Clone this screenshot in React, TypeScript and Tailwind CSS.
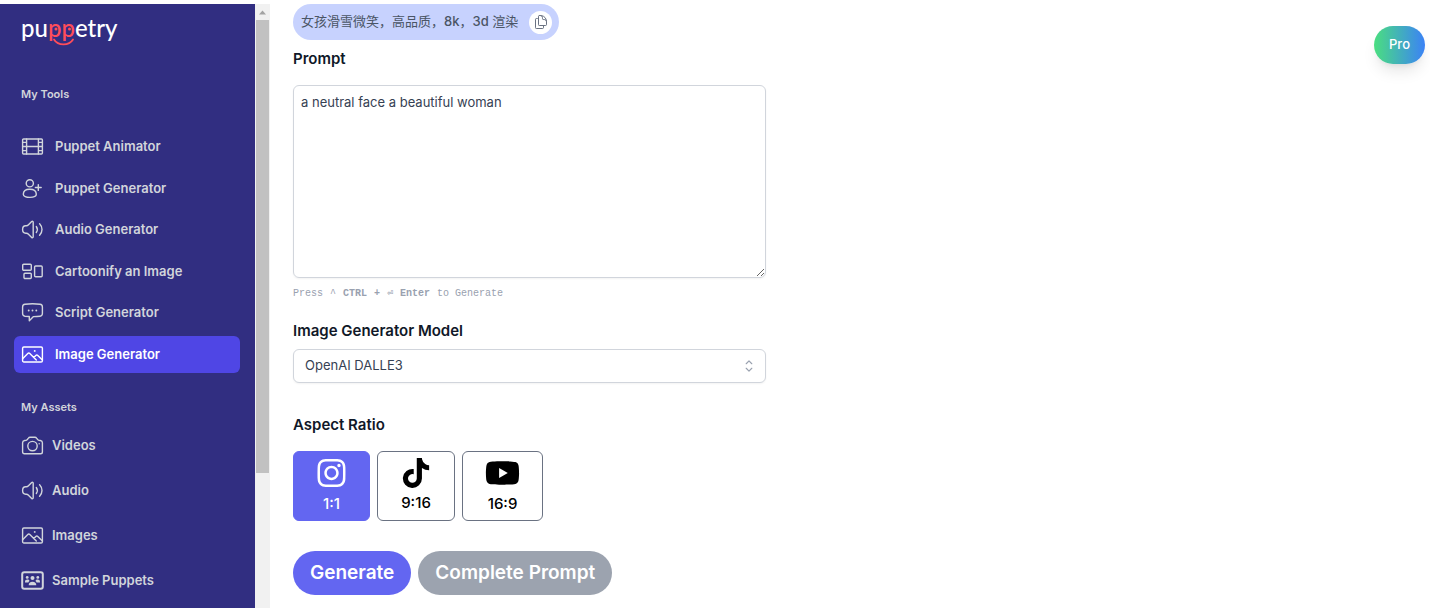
import { useState, type ReactNode } from "react";
import { FaInstagram, FaTiktok, FaYoutube } from "react-icons/fa6";
import { HiChevronUpDown, HiOutlineDocumentDuplicate } from "react-icons/hi2";

interface NavItem {
  label: string;
  icon: ReactNode;
}

function Icon({ children }: { children: ReactNode }) {
  return (
    <svg
      viewBox="0 0 23 23"
      className="h-[23px] w-[23px] shrink-0"
      fill="none"
      stroke="currentColor"
      strokeWidth="1.4"
      strokeLinecap="round"
      strokeLinejoin="round"
      aria-hidden="true"
    >
      {children}
    </svg>
  );
}

const film = (
  <Icon>
    <rect x="1.6" y="4" width="19.8" height="15" rx="1" />
    <path d="M5.6 4v15M17.4 4v15M5.6 11.5h11.8M1.6 7.4h4M1.6 11.5h4M1.6 15.6h4M17.4 7.4h4M17.4 11.5h4M17.4 15.6h4" />
  </Icon>
);

const userPlus = (
  <Icon>
    <circle cx="8.8" cy="6.3" r="3.6" />
    <path d="M2.3 17.3c0-3.4 2.6-5 6.5-5s6.5 1.6 6.5 5c0 2-2.9 3.1-6.5 3.1s-6.5-1.1-6.5-3.1zM17.3 7.6v5.8M14.4 10.5h5.8" />
  </Icon>
);

const speaker = (
  <Icon>
    <path d="M12.2 4.2v14.6c0 1-.9 1.2-1.5.6l-3.5-3.5c-.5-.5-1-.7-1.7-.7h-.8C2.500 15.2 1.6 13.700 1.6 11.5S2.500 7.800 4.700 7.800h.8c.7 0 1.2-.2 1.7-.7l3.500-3.500c.6-.6 1.500-.4 1.500.6z" />
    <path d="M15.3 8.5c1.3 1.8 1.3 4.2 0 6M18.600 5.800c3.200 3.300 3.200 8.100 0 11.400" />
  </Icon>
);

const blocks = (
  <Icon>
    <rect x="1.7" y="4.2" width="8.6" height="6" rx="1" />
    <rect x="3" y="13.3" width="7.3" height="5.2" rx="1" />
    <rect x="13.6" y="6" width="7.6" height="10.7" rx="1" />
  </Icon>
);

const chat = (
  <Icon>
    <path d="M4 3.3c5-.7 10-.7 15 0 1.5.2 2.4 1.2 2.4 2.7v6.5c0 1.5-.9 2.5-2.4 2.7-2.2.3-4.3.4-6.5.4l-4.2 4.2v-4.3c-1.500-.1-2.900-.2-4.300-.3-1.500-.2-2.400-1.200-2.400-2.700V6c0-1.500.9-2.500 2.400-2.700z" />
    <path d="M7.7 9.5h.01M11.5 9.5h.01M15.3 9.5h.01" strokeWidth="1.9" />
  </Icon>
);

const picture = (
  <Icon>
    <rect x="1.6" y="4" width="19.8" height="15" rx="1.3" />
    <path d="M1.6 15.8l5.2-5.4c.6-.6 1.4-.6 2 0l6.5 6.6M12.8 14.4l2-2c.6-.6 1.4-.6 2 0l4.6 4.6" />
    <path d="M13.7 7.9h.01" strokeWidth="1.9" />
  </Icon>
);

const camera = (
  <Icon>
    <path d="M6.3 5.6l1.1-1.5c.4-.6 1-.9 1.7-.9h4.800c.7 0 1.300.3 1.700.9l1.100 1.500c.3.4.7.6 1.2.7l1.5.2c1.2.2 2 1 2 2.2v9.2c0 1.1-.7 1.8-1.8 1.8H3.4c-1.1 0-1.8-.7-1.8-1.8V8.7c0-1.2.8-2 2-2.2l1.500-.2c.5-.1.9-.3 1.200-.7z" />
    <circle cx="11.5" cy="12.1" r="4.7" />
    <path d="M18.2 9.8h.01" />
  </Icon>
);

const group = (
  <Icon>
    <rect x="1.2" y="3.3" width="20.6" height="16.4" rx="2" strokeWidth="2" />
    <g fill="currentColor" stroke="none">
      <circle cx="6.2" cy="8.4" r="1.4" />
      <circle cx="11.5" cy="8.9" r="2" />
      <circle cx="16.8" cy="8.4" r="1.4" />
      <path d="M4 12.8c0-1.5 1-2.2 2.4-2.2 1 0 1.8.4 2.1 1.3-.6.4-1 .9-1.1 1.5H4zM19 12.8c0-1.5-1-2.2-2.4-2.2-1 0-1.8.4-2.1 1.3.6.4 1 .9 1.1 1.5H19zM7.7 16.3c0-2.2 1.3-3.5 3.8-3.5s3.8 1.3 3.8 3.5z" />
    </g>
  </Icon>
);

const tools: NavItem[] = [
  { label: "Puppet Animator", icon: film },
  { label: "Puppet Generator", icon: userPlus },
  { label: "Audio Generator", icon: speaker },
  { label: "Cartoonify an Image", icon: blocks },
  { label: "Script Generator", icon: chat },
  { label: "Image Generator", icon: picture },
];

const assets: NavItem[] = [
  { label: "Videos", icon: camera },
  { label: "Audio", icon: speaker },
  { label: "Images", icon: picture },
  { label: "Sample Puppets", icon: group },
];

const ratios = [
  { value: "1:1", icon: <FaInstagram className="h-8 w-[31px]" /> },
  { value: "9:16", icon: <FaTiktok className="h-[30px] w-8" /> },
  { value: "16:9", icon: <FaYoutube className="h-8 w-[35px]" /> },
];

function Logo() {
  return (
    <a
      href="#"
      className="relative ml-[21px] block w-fit font-['Lato',sans-serif] text-2xl font-medium leading-8 text-white"
    >
      pu<span className="text-[#ff4d5a]">pp</span>etry
      <svg
        viewBox="0 0 28 28"
        className="absolute left-[27px] top-2 h-7 w-7 text-[#ff4d5a]"
        fill="none"
        stroke="currentColor"
        strokeWidth="1.8"
        strokeLinecap="round"
        aria-hidden="true"
      >
        <path d="M6 19.5c4 6.5 15 6.5 19 0" />
        <path d="M8 9h.01M21.5 9h.01" strokeWidth="3" />
      </svg>
    </a>
  );
}

function Sidebar() {
  return (
    <aside className="w-[255px] shrink-0 overflow-hidden bg-[#312e81] pt-2 text-[#d1d5db]">
      <Logo />
      <nav className="pl-[14px] pr-[15px] pt-10">
        <h2 className="px-[7px] text-[11px] font-semibold leading-5">My Tools</h2>
        <ul className="mt-6 grid h-[245px] auto-rows-fr gap-1">
          {tools.map((item) => {
            const active = item.label === "Image Generator";
            return (
              <li key={item.label}>
                <a
                  href="#"
                  aria-current={active ? "page" : undefined}
                  className={`flex h-full items-center gap-[11px] rounded-md px-[7px] text-[13px] font-semibold ${
                    active ? "bg-[#4f46e5] text-white" : ""
                  }`}
                >
                  {item.icon}
                  {item.label}
                </a>
              </li>
            );
          })}
        </ul>
        <h2 className="mt-6 px-[7px] text-[11px] font-semibold leading-5">My Assets</h2>
        <ul className="mt-[6px]">
          {assets.map((item) => (
            <li key={item.label}>
              <a
                href="#"
                className="flex h-[45px] items-center gap-2 px-[7px] text-[13px] font-semibold"
              >
                {item.icon}
                {item.label}
              </a>
            </li>
          ))}
        </ul>
      </nav>
    </aside>
  );
}

function ScrollTrack() {
  return (
    <div className="flex w-[15px] shrink-0 flex-col items-center bg-[#f1f1f1]" aria-hidden="true">
      <svg viewBox="0 0 15 16" className="h-4 w-[15px]" fill="#a3a3a3">
        <path d="M4 10.5L7.5 6.5L11 10.5z" />
      </svg>
      <div className="h-3/4 w-[13px] bg-[#c1c1c1]" />
    </div>
  );
}

export default function App() {
  const [prompt, setPrompt] = useState("a neutral face a beautiful woman");
  const [ratio, setRatio] = useState("1:1");

  return (
    <div className="flex h-screen overflow-hidden bg-white pt-1 font-['Inter','Noto_Sans_CJK_SC',sans-serif] text-gray-900">
      <Sidebar />
      <ScrollTrack />
      <main className="min-w-0 flex-1 pl-[23px]">
        <div className="flex h-9 w-fit items-center gap-[11px] rounded-full bg-[#c7d2fe] pl-2 pr-[7px] text-[13px] text-gray-600">
          <p>
            女孩滑雪微笑，高品质，<span className="font-medium">8k</span>，
            <span className="font-medium">3d</span> 渲染
          </p>
          <button
            type="button"
            aria-label="Copy prompt"
            className="flex h-[23px] w-[23px] items-center justify-center rounded-full bg-white text-gray-500"
          >
            <HiOutlineDocumentDuplicate className="h-4 w-4" />
          </button>
        </div>

        <form className="max-w-[473px]" onSubmit={(e) => e.preventDefault()}>
          <label htmlFor="prompt" className="mt-2 block text-[15px] font-semibold leading-[22px]">
            Prompt
          </label>
          <textarea
            id="prompt"
            value={prompt}
            onChange={(e) => setPrompt(e.target.value)}
            className="mt-[15px] block h-[193px] w-full rounded-md border border-gray-300 px-[7px] py-[6px] text-[13px] leading-5 text-gray-700 shadow-xs"
          />
          <p className="mt-2 flex gap-[7px] font-['Liberation_Mono',monospace] text-[10px] leading-4 text-gray-400">
            <span>Press</span>
            <span>^</span>
            <b>CTRL</b>
            <b>+</b>
            <b>⏎</b>
            <b>Enter</b>
            <span>to Generate</span>
          </p>

          <label htmlFor="model" className="mt-[18px] block text-[15px] font-semibold leading-[22px]">
            Image Generator Model
          </label>
          <div className="relative mt-[7px]">
            <select
              id="model"
              className="h-[34px] w-full appearance-none rounded-md border border-gray-300 bg-white px-[11px] text-[13px] text-gray-700 shadow-xs"
            >
              <option>OpenAI DALLE3</option>
            </select>
            <HiChevronUpDown className="pointer-events-none absolute right-2 top-2 h-[18px] w-[18px] text-gray-400" />
          </div>

          <fieldset className="mt-[31px]">
            <legend className="text-[15px] font-semibold leading-[22px]">Aspect Ratio</legend>
            <div className="mt-[15px] flex gap-[7px]">
              {ratios.map((item) => (
                <button
                  key={item.value}
                  type="button"
                  aria-pressed={ratio === item.value}
                  onClick={() => setRatio(item.value)}
                  className={`flex h-[70px] flex-col items-center justify-center rounded-md border px-[22px] text-[15px] font-medium leading-[22px] ${
                    ratio === item.value
                      ? "border-[#6366f1] bg-[#6366f1] text-white"
                      : "border-gray-500 bg-white text-black"
                  }`}
                >
                  {item.icon}
                  <span className="mt-1">{item.value}</span>
                </button>
              ))}
            </div>
          </fieldset>

          <div className="mt-[30px] flex gap-[7px] text-[19px] font-semibold text-white">
            <button type="submit" className="h-11 rounded-full bg-[#6366f1] px-[17px]">
              Generate
            </button>
            <button type="button" className="h-11 rounded-full bg-[#9ca3af] px-[17px]">
              Complete Prompt
            </button>
          </div>
        </form>
      </main>
      <div className="pr-[5px] pt-[22px]">
        <button
          type="button"
          className="h-[38px] rounded-full bg-linear-to-r/srgb from-[#4ade80] to-[#3b82f6] px-[15px] text-[13px] font-medium text-white shadow-lg"
        >
          Pro
        </button>
      </div>
    </div>
  );
}
